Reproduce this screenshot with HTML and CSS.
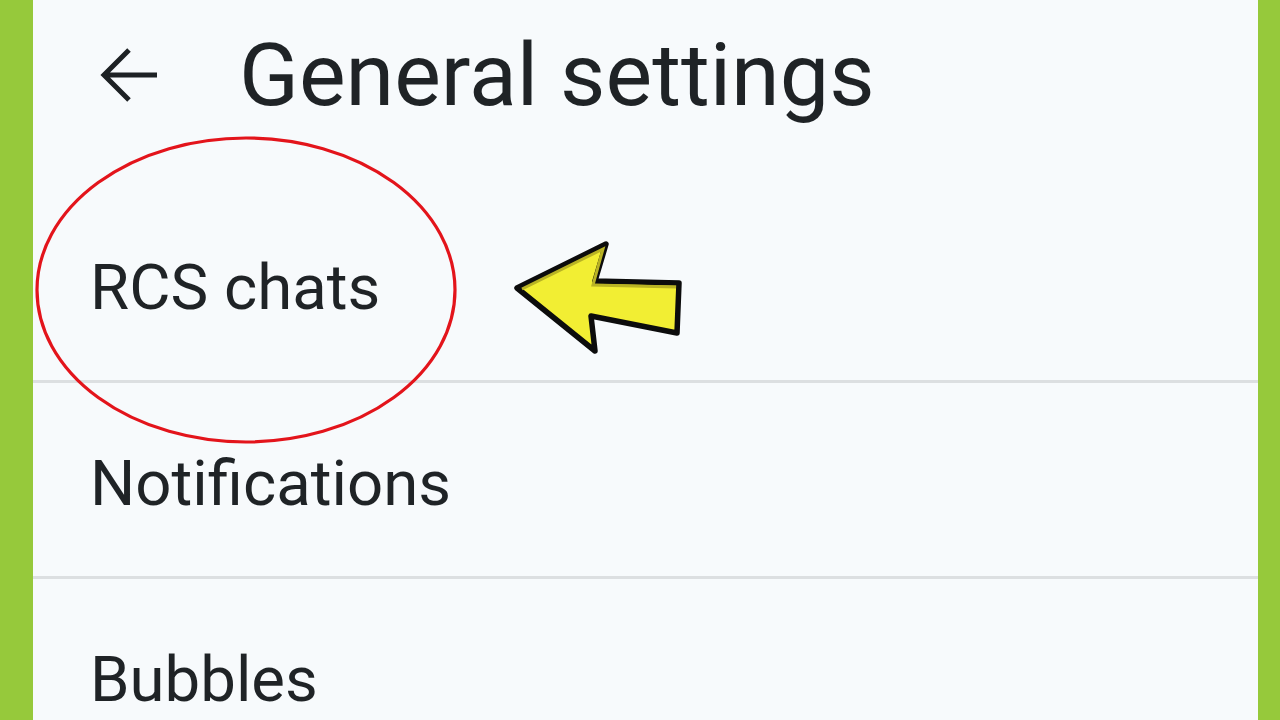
FILE: index.html
```html
<!DOCTYPE html>
<html>
<head>
<meta charset="utf-8">
<link rel="stylesheet" href="styles.css">
</head>
<body>
<div class="frame">
  <div class="side side-left"></div>
  <main class="panel">
    <header class="header">
      <svg class="back" width="60" height="60" viewBox="0 0 60 60" aria-hidden="true">
        <path d="M29 50 L4 25 L29 0 M4 25 H57" transform="translate(0 5)" fill="none" stroke="#1d2124" stroke-width="5" stroke-linecap="butt" stroke-linejoin="miter"/>
      </svg>
      <h1 class="title">General settings</h1>
    </header>
    <ul class="list">
      <li class="item">RCS chats</li>
      <li class="item">Notifications</li>
      <li class="item">Bubbles</li>
    </ul>
    <svg class="overlay" width="1225" height="720" viewBox="33 0 1225 720" aria-hidden="true">
      <ellipse cx="246" cy="290" rx="209" ry="152" fill="none" stroke="#e3141b" stroke-width="3.2"/>
      <path d="M517 288 L606 244 L595 281 L679 283 L677 333 L591 316 L595 351 Z" fill="#f2ee33" stroke="#0c0c0c" stroke-width="5.5" stroke-linejoin="round"/>
      <path d="M522 289 L603 249 L593 285 L676 287" fill="none" stroke="#b9b324" stroke-width="3"/>
    </svg>
  </main>
  <div class="side side-right"></div>
</div>
</body>
</html>
```
FILE: styles.css
```css
html, body {
  margin: 0;
  padding: 0;
  width: 1280px;
  height: 720px;
  overflow: hidden;
  background: #f7fafc;
}
.frame {
  display: flex;
  width: 1280px;
  height: 720px;
}
.side {
  background: #96c93b;
  flex: none;
}
.side-left { width: 33px; }
.side-right { width: 22px; }
.panel {
  position: relative;
  flex: 1;
  background: #f7fafc;
  overflow: hidden;
  font-family: Roboto, "Noto Sans", sans-serif;
  color: #1f2326;
}
.header {
  display: flex;
  align-items: center;
  height: 187px;
  padding-left: 67px;
  box-sizing: border-box;
  padding-bottom: 38px;
}
.back {
  flex: none;
  display: block;
}
.title {
  margin: 0 0 0 79px;
  font-size: 88px;
  font-weight: 400;
  letter-spacing: 0;
  line-height: 1;
}
.list {
  list-style: none;
  margin: 0;
  padding: 0;
}
.item {
  height: 196px;
  box-sizing: border-box;
  padding-left: 57px;
  padding-top: 9px;
  display: flex;
  align-items: center;
  font-size: 63.5px;
  line-height: 1;
  border-bottom: 3px solid #dcdfe1;
}
.overlay {
  position: absolute;
  left: 0;
  top: 0;
}
```
